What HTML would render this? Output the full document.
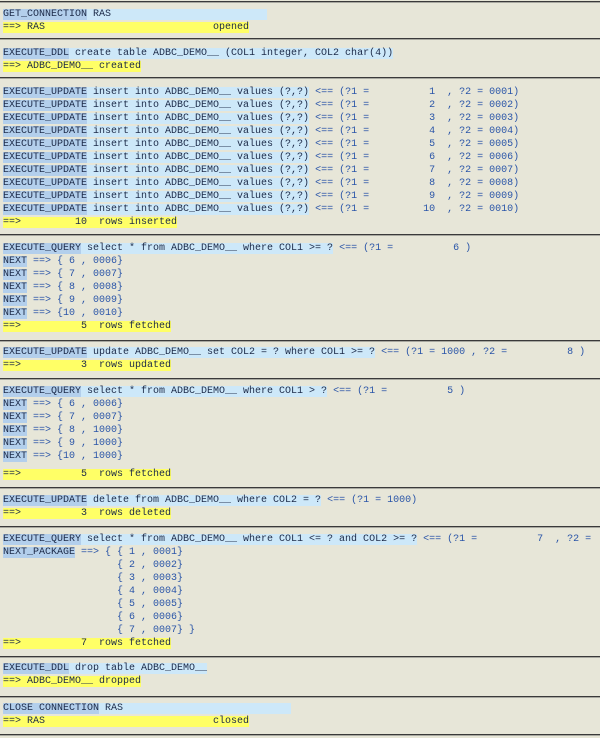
<!DOCTYPE html>
<html><head><meta charset="utf-8"><style>
html,body{margin:0;padding:0;}
body{width:600px;height:738px;background:#e7e6d8;position:relative;overflow:hidden;font-family:"Liberation Mono",monospace;font-size:10px;}
.l{position:absolute;left:3px;height:13px;line-height:13px;white-space:pre;color:#1c2a48;}
.k{background:#b3cfec;}
.c{background:#cde8f9;}
.y{background:#ffff66;}
.p{color:#2a55a8;}
.s{position:absolute;left:0;width:600px;height:1px;background:#3a3a3a;border-bottom:1px solid #a8a8a0;}
</style></head><body>
<div class="s" style="top:1px"></div>
<div class="l" style="top:8px"><span class="k">GET_CONNECTION</span><span class="c"> RAS                          </span></div>
<div class="l" style="top:21px"><span class="y">==&gt; RAS                            opened</span></div>
<div class="s" style="top:38px"></div>
<div class="l" style="top:47px"><span class="k">EXECUTE_DDL</span><span class="c"> create table ADBC_DEMO__ (COL1 integer, COL2 char(4))</span></div>
<div class="l" style="top:60px"><span class="y">==&gt; ADBC_DEMO__ created</span></div>
<div class="s" style="top:77px"></div>
<div class="l" style="top:86px"><span class="k">EXECUTE_UPDATE</span><span class="c"> insert into ADBC_DEMO__ values (?,?)</span><span class="p"> &lt;== (?1 =          1  , ?2 = 0001)</span></div>
<div class="l" style="top:99px"><span class="k">EXECUTE_UPDATE</span><span class="c"> insert into ADBC_DEMO__ values (?,?)</span><span class="p"> &lt;== (?1 =          2  , ?2 = 0002)</span></div>
<div class="l" style="top:112px"><span class="k">EXECUTE_UPDATE</span><span class="c"> insert into ADBC_DEMO__ values (?,?)</span><span class="p"> &lt;== (?1 =          3  , ?2 = 0003)</span></div>
<div class="l" style="top:125px"><span class="k">EXECUTE_UPDATE</span><span class="c"> insert into ADBC_DEMO__ values (?,?)</span><span class="p"> &lt;== (?1 =          4  , ?2 = 0004)</span></div>
<div class="l" style="top:138px"><span class="k">EXECUTE_UPDATE</span><span class="c"> insert into ADBC_DEMO__ values (?,?)</span><span class="p"> &lt;== (?1 =          5  , ?2 = 0005)</span></div>
<div class="l" style="top:151px"><span class="k">EXECUTE_UPDATE</span><span class="c"> insert into ADBC_DEMO__ values (?,?)</span><span class="p"> &lt;== (?1 =          6  , ?2 = 0006)</span></div>
<div class="l" style="top:164px"><span class="k">EXECUTE_UPDATE</span><span class="c"> insert into ADBC_DEMO__ values (?,?)</span><span class="p"> &lt;== (?1 =          7  , ?2 = 0007)</span></div>
<div class="l" style="top:177px"><span class="k">EXECUTE_UPDATE</span><span class="c"> insert into ADBC_DEMO__ values (?,?)</span><span class="p"> &lt;== (?1 =          8  , ?2 = 0008)</span></div>
<div class="l" style="top:190px"><span class="k">EXECUTE_UPDATE</span><span class="c"> insert into ADBC_DEMO__ values (?,?)</span><span class="p"> &lt;== (?1 =          9  , ?2 = 0009)</span></div>
<div class="l" style="top:203px"><span class="k">EXECUTE_UPDATE</span><span class="c"> insert into ADBC_DEMO__ values (?,?)</span><span class="p"> &lt;== (?1 =         10  , ?2 = 0010)</span></div>
<div class="l" style="top:216px"><span class="y">==&gt;         10  rows inserted</span></div>
<div class="s" style="top:234px"></div>
<div class="l" style="top:242px"><span class="k">EXECUTE_QUERY</span><span class="c"> select * from ADBC_DEMO__ where COL1 &gt;= ?</span><span class="p"> &lt;== (?1 =          6 )</span></div>
<div class="l" style="top:255px"><span class="k">NEXT</span><span class="p"> ==&gt; { 6 , 0006}</span></div>
<div class="l" style="top:268px"><span class="k">NEXT</span><span class="p"> ==&gt; { 7 , 0007}</span></div>
<div class="l" style="top:281px"><span class="k">NEXT</span><span class="p"> ==&gt; { 8 , 0008}</span></div>
<div class="l" style="top:294px"><span class="k">NEXT</span><span class="p"> ==&gt; { 9 , 0009}</span></div>
<div class="l" style="top:307px"><span class="k">NEXT</span><span class="p"> ==&gt; {10 , 0010}</span></div>
<div class="l" style="top:320px"><span class="y">==&gt;          5  rows fetched</span></div>
<div class="s" style="top:340px"></div>
<div class="l" style="top:346px"><span class="k">EXECUTE_UPDATE</span><span class="c"> update ADBC_DEMO__ set COL2 = ? where COL1 &gt;= ?</span><span class="p"> &lt;== (?1 = 1000 , ?2 =          8 )</span></div>
<div class="l" style="top:359px"><span class="y">==&gt;          3  rows updated</span></div>
<div class="s" style="top:378px"></div>
<div class="l" style="top:385px"><span class="k">EXECUTE_QUERY</span><span class="c"> select * from ADBC_DEMO__ where COL1 &gt; ?</span><span class="p"> &lt;== (?1 =          5 )</span></div>
<div class="l" style="top:398px"><span class="k">NEXT</span><span class="p"> ==&gt; { 6 , 0006}</span></div>
<div class="l" style="top:411px"><span class="k">NEXT</span><span class="p"> ==&gt; { 7 , 0007}</span></div>
<div class="l" style="top:424px"><span class="k">NEXT</span><span class="p"> ==&gt; { 8 , 1000}</span></div>
<div class="l" style="top:437px"><span class="k">NEXT</span><span class="p"> ==&gt; { 9 , 1000}</span></div>
<div class="l" style="top:450px"><span class="k">NEXT</span><span class="p"> ==&gt; {10 , 1000}</span></div>
<div class="l" style="top:468px"><span class="y">==&gt;          5  rows fetched</span></div>
<div class="s" style="top:487px"></div>
<div class="l" style="top:494px"><span class="k">EXECUTE_UPDATE</span><span class="c"> delete from ADBC_DEMO__ where COL2 = ?</span><span class="p"> &lt;== (?1 = 1000)</span></div>
<div class="l" style="top:507px"><span class="y">==&gt;          3  rows deleted</span></div>
<div class="s" style="top:526px"></div>
<div class="l" style="top:533px"><span class="k">EXECUTE_QUERY</span><span class="c"> select * from ADBC_DEMO__ where COL1 &lt;= ? and COL2 &gt;= ?</span><span class="p"> &lt;== (?1 =          7  , ?2 = </span></div>
<div class="l" style="top:546px"><span class="k">NEXT_PACKAGE</span><span class="p"> ==&gt; { { 1 , 0001}</span></div>
<div class="l p" style="top:559px">                   { 2 , 0002}</div>
<div class="l p" style="top:572px">                   { 3 , 0003}</div>
<div class="l p" style="top:585px">                   { 4 , 0004}</div>
<div class="l p" style="top:598px">                   { 5 , 0005}</div>
<div class="l p" style="top:611px">                   { 6 , 0006}</div>
<div class="l p" style="top:624px">                   { 7 , 0007} }</div>
<div class="l" style="top:637px"><span class="y">==&gt;          7  rows fetched</span></div>
<div class="s" style="top:656px"></div>
<div class="l" style="top:662px"><span class="k">EXECUTE_DDL</span><span class="c"> drop table ADBC_DEMO__</span></div>
<div class="l" style="top:675px"><span class="y">==&gt; ADBC_DEMO__ dropped</span></div>
<div class="s" style="top:696px"></div>
<div class="l" style="top:702px"><span class="k">CLOSE CONNECTION</span><span class="c"> RAS                            </span></div>
<div class="l" style="top:715px"><span class="y">==&gt; RAS                            closed</span></div>
<div class="s" style="top:734px"></div>
</body></html>
